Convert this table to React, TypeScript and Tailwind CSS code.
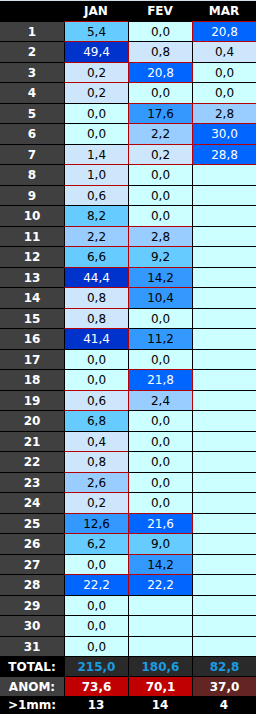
const jan: number[] = [5.4, 49.4, 0.2, 0.2, 0.0, 0.0, 1.4, 1.0, 0.6, 8.2, 2.2, 6.6, 44.4, 0.8, 0.8, 41.4, 0.0, 0.0, 0.6, 6.8, 0.4, 0.8, 2.6, 0.2, 12.6, 6.2, 0.0, 22.2, 0.0, 0.0, 0.0];
const fev: (number | null)[] = [0.0, 0.8, 20.8, 0.0, 17.6, 2.2, 0.2, 0.0, 0.0, 0.0, 2.8, 9.2, 14.2, 10.4, 0.0, 11.2, 0.0, 21.8, 2.4, 0.0, 0.0, 0.0, 0.0, 0.0, 21.6, 9.0, 14.2, 22.2, null, null, null];
const mar: (number | null)[] = [20.8, 0.4, 0.0, 0.0, 2.8, 30.0, 28.8];

// red separators, read off the sheet (line above day n / line left of a cell on day n)
const topRed = [
  new Set([1, 2, 3, 4, 8, 9, 11, 12, 13, 14, 15, 16, 19, 20, 22, 23, 24, 25, 26, 28]),
  new Set([3, 4, 5, 6, 7, 8, 11, 12, 13, 14, 18, 19, 25, 26, 27, 28]),
  new Set([1, 2, 5, 6, 7, 8]),
];
const leftRed = [
  new Set<number>(),
  new Set([2, 3, 5, 6, 7, 11, 12, 13, 14, 16, 18, 19, 23, 24, 25, 26, 27, 28]),
  new Set([1, 3, 5, 6, 7, 18, 19, 25]),
];

function cellBg(v: number | null | undefined) {
  if (v == null || v === 0) return "bg-[#ccffff] text-black";
  if (v < 2) return "bg-[#cde6fc] text-black";
  if (v < 5) return "bg-[#99ccff] text-black";
  if (v < 10) return "bg-[#66ccff] text-black";
  if (v < 20) return "bg-[#3399ff] text-black";
  if (v < 40) return "bg-[#0066ff] text-white";
  return "bg-[#0033cc] text-white";
}

const fmt = (v: number | null | undefined) => (v == null ? "" : v.toFixed(1).replace(".", ","));

function DataCell({ v, day, col }: { v: number | null | undefined; day: number; col: number }) {
  const t = topRed[col].has(day) ? "border-t-[#b40000]" : "border-t-black";
  const l = leftRed[col].has(day) ? "border-l-[#b40000]" : "border-l-black";
  return (
    <div className={`w-[64px] border-t border-l ${t} ${l} ${cellBg(v)} flex items-center justify-center`}>
      {fmt(v)}
    </div>
  );
}

export default function App() {
  const days = Array.from({ length: 31 }, (_, i) => i + 1);
  return (
    <div className="w-[256px] text-[12px] leading-none" style={{ fontFamily: '"DejaVu Sans", Verdana, sans-serif' }}>
      {/* header */}
      <div className="flex h-[21px] border-t border-t-[#d4dfee] bg-black font-bold text-white">
        <div className="w-[64px]" />
        <div className="w-[64px] flex items-center justify-center">JAN</div>
        <div className="w-[64px] flex items-center justify-center">FEV</div>
        <div className="w-[64px] flex items-center justify-center">MAR</div>
      </div>

      {days.map((d) => (
        <div key={d} className={`flex ${d % 2 === 1 ? "h-[20px]" : "h-[21px]"}`}>
          <div className="w-[64px] border-t border-t-black bg-[#404040] text-white font-bold flex items-center justify-center">
            {d}
          </div>
          <DataCell v={jan[d - 1]} day={d} col={0} />
          <DataCell v={fev[d - 1]} day={d} col={1} />
          <DataCell v={mar[d - 1]} day={d} col={2} />
        </div>
      ))}

      {/* totals */}
      <div className="flex h-[20px] border-t border-t-black font-bold">
        <div className="w-[64px] bg-black text-white flex items-center justify-center">TOTAL:</div>
        <div className="w-[64px] border-l border-l-black bg-[#2a2a2a] text-[#1a9be0] flex items-center justify-center">215,0</div>
        <div className="w-[64px] border-l border-l-black bg-[#2a2a2a] text-[#1a9be0] flex items-center justify-center">180,6</div>
        <div className="w-[64px] border-l border-l-black bg-[#2a2a2a] text-[#1a9be0] flex items-center justify-center">82,8</div>
      </div>
      <div className="flex h-[20px] border-t border-t-black font-bold text-white">
        <div className="w-[64px] bg-[#404040] flex items-center justify-center">ANOM:</div>
        <div className="w-[64px] border-l border-l-black bg-[#c00000] flex items-center justify-center">73,6</div>
        <div className="w-[64px] border-l border-l-black bg-[#c00000] flex items-center justify-center">70,1</div>
        <div className="w-[64px] border-l border-l-black bg-[#632523] flex items-center justify-center">37,0</div>
      </div>
      <div className="flex h-[18px] bg-black font-bold text-white">
        <div className="w-[64px] flex items-center justify-center">&gt;1mm:</div>
        <div className="w-[64px] flex items-center justify-center">13</div>
        <div className="w-[64px] flex items-center justify-center">14</div>
        <div className="w-[64px] flex items-center justify-center">4</div>
      </div>
    </div>
  );
}
